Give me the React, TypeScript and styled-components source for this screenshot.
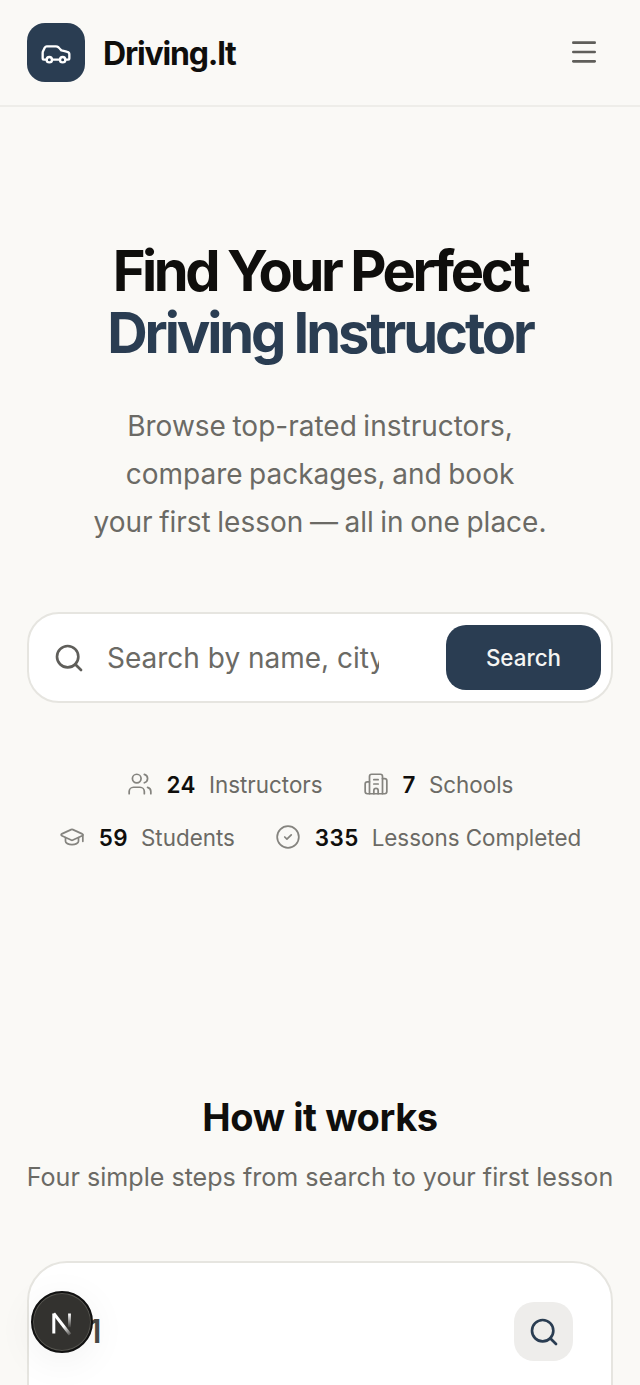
import * as React from "react"
import styled, { createGlobalStyle } from "styled-components"
import { Building2, Car, CircleCheck, GraduationCap, Menu, Search, Users } from "lucide-react"

const GlobalStyle = createGlobalStyle`
  html, body {
    margin: 0;
    padding: 0;
    background: #faf9f6;
    font-family: Inter, "Liberation Sans", sans-serif;
    overflow-x: hidden;
  }
  * { box-sizing: border-box; }
`

const Header = styled.header`
  display: flex;
  align-items: center;
  justify-content: space-between;
  height: 107px;
  padding: 0 27px;
  border-bottom: 2px solid #eeede9;
`

const Brand = styled.div`
  display: flex;
  align-items: center;
  gap: 18px;
`

const LogoMark = styled.div`
  display: flex;
  align-items: center;
  justify-content: center;
  width: 58px;
  height: 59px;
  border-radius: 18px;
  background: #2a3d52;
  color: #fff;
`

const BrandName = styled.span`
  margin-top: 2px;
  font-size: 32px;
  font-weight: 700;
  letter-spacing: -1.2px;
  color: #0f0e0c;
`

const MenuButton = styled.button`
  display: flex;
  padding: 0;
  margin: 0 13px 2px 0;
  border: 0;
  background: none;
  color: #5f5e5a;
`

const Hero = styled.section`
  display: flex;
  flex-direction: column;
  align-items: center;
  padding: 133px 27px 0;
`

const Title = styled.h1`
  margin: 0;
  font-size: 56px;
  line-height: 62px;
  font-weight: 700;
  letter-spacing: -3.4px;
  text-align: center;
  color: #0f0e0c;
`

const Accent = styled.span`
  display: block;
  letter-spacing: -3.1px;
  color: #2a3d52;
`

const Lead = styled.p`
  margin: 38px 0 0;
  font-size: 28px;
  line-height: 48px;
  word-spacing: -1.3px;
  text-align: center;
  color: #6b6a65;
`

const SearchBox = styled.form`
  display: flex;
  align-items: center;
  width: 586px;
  height: 91px;
  margin-top: 66px;
  padding: 0 10px 0 24px;
  border: 2px solid #e6e5e0;
  border-radius: 32px;
  background: #fff;
  color: #5f5e5a;
`

const SearchInput = styled.input`
  flex: 1;
  min-width: 0;
  margin-left: 22px;
  margin-right: 67px;
  padding: 0;
  border: 0;
  outline: 0;
  background: none;
  font: inherit;
  font-size: 28px;
  color: #0f0e0c;

  &::placeholder {
    color: #6b6a65;
    opacity: 1;
  }
`

const SearchButton = styled.button`
  flex: none;
  width: 155px;
  height: 65px;
  border: 0;
  border-radius: 20px;
  background: #2a3d52;
  color: #f5f5f3;
  font: inherit;
  font-size: 22.4px;
  font-weight: 500;
`

const Stats = styled.div`
  display: flex;
  flex-wrap: wrap;
  justify-content: center;
  gap: 25px 40px;
  width: 586px;
  margin-top: 67px;
`

const Stat = styled.div`
  display: flex;
  align-items: center;
  height: 28px;
  font-size: 22.4px;
  color: #6b6a65;

  svg {
    flex: none;
    margin-right: 14px;
    color: #85847f;
  }
`

const StatValue = styled.strong`
  margin-right: 13px;
  font-weight: 600;
  letter-spacing: 0.4px;
  color: #0f0e0c;
`

const Steps = styled.section`
  display: flex;
  flex-direction: column;
  align-items: center;
  padding: 0 27px 40px;
  margin-top: 242px;
`

const StepsTitle = styled.h2`
  margin: 0;
  font-size: 38px;
  line-height: 48px;
  font-weight: 700;
  letter-spacing: -0.4px;
  color: #0f0e0c;
`

const StepsLead = styled.p`
  margin: 19px 0 0;
  font-size: 25.1px;
  line-height: 34px;
  white-space: nowrap;
  color: #6b6a65;
`

const StepCard = styled.article`
  display: flex;
  align-items: flex-start;
  justify-content: space-between;
  width: 586px;
  height: 320px;
  margin-top: 67px;
  padding: 39px 38px 0 38px;
  border: 2px solid #e6e5e0;
  border-radius: 40px;
  background: #fff;
`

const StepNumber = styled.span`
  margin-top: 8px;
  font-size: 32px;
  line-height: 44px;
  font-weight: 600;
  color: #4a4945;
`

const StepIcon = styled.div`
  display: flex;
  align-items: center;
  justify-content: center;
  width: 59px;
  height: 59px;
  border-radius: 20px;
  background: #eeedeb;
  color: #2a3d52;
`

const DevBadge = styled.div`
  position: fixed;
  left: 31px;
  top: 1291px;
  display: flex;
  align-items: center;
  justify-content: center;
  width: 62px;
  height: 62px;
  padding-top: 3px;
  border: 2px solid #111;
  border-radius: 50%;
  background: #33322f;
  box-shadow: inset 0 0 0 1px #55544f, 0 8px 40px rgba(0, 0, 0, 0.06);
`

const NextMark = () => (
  <svg width="24" height="24" viewBox="0 0 24 24" fill="none">
    <defs>
      <linearGradient id="next-diagonal" x1="4" y1="2" x2="20" y2="23" gradientUnits="userSpaceOnUse">
        <stop offset="0.6" stopColor="#fff" />
        <stop offset="1" stopColor="#fff" stopOpacity="0.15" />
      </linearGradient>
      <linearGradient id="next-stem" x1="19" y1="2" x2="19" y2="16" gradientUnits="userSpaceOnUse">
        <stop offset="0" stopColor="#fff" />
        <stop offset="1" stopColor="#fff" stopOpacity="0" />
      </linearGradient>
    </defs>
    <path d="M3.8 1.5v20" stroke="#fff" strokeWidth="3" />
    <path d="M3.8 1.5 20 22.5" stroke="url(#next-diagonal)" strokeWidth="3" />
    <path d="M19.5 1.5v14" stroke="url(#next-stem)" strokeWidth="2.8" />
  </svg>
)

export default function App() {
  return (
    <>
      <GlobalStyle />
      <Header>
        <Brand>
          <LogoMark>
            <Car size={32} strokeWidth={1.75} />
          </LogoMark>
          <BrandName>Driving.lt</BrandName>
        </Brand>
        <MenuButton aria-label="Menu">
          <Menu size={32} strokeWidth={2} />
        </MenuButton>
      </Header>

      <main>
        <Hero>
          <Title>
            Find Your Perfect
            <Accent>Driving Instructor</Accent>
          </Title>
          <Lead>
            Browse top-rated instructors,
            <br />
            compare packages, and book
            <br />
            your first lesson — all in one place.
          </Lead>
          <SearchBox onSubmit={(e) => e.preventDefault()}>
            <Search size={32} strokeWidth={2} />
            <SearchInput placeholder="Search by name, city or school" />
            <SearchButton>Search</SearchButton>
          </SearchBox>
          <Stats>
            <Stat>
              <Users size={26} strokeWidth={1.6} />
              <StatValue>24</StatValue>
              Instructors
            </Stat>
            <Stat>
              <Building2 size={26} strokeWidth={1.6} />
              <StatValue>7</StatValue>
              Schools
            </Stat>
            <Stat>
              <GraduationCap size={26} strokeWidth={1.6} />
              <StatValue>59</StatValue>
              Students
            </Stat>
            <Stat>
              <CircleCheck size={26} strokeWidth={1.6} />
              <StatValue>335</StatValue>
              Lessons Completed
            </Stat>
          </Stats>
        </Hero>

        <Steps>
          <StepsTitle>How it works</StepsTitle>
          <StepsLead>Four simple steps from search to your first lesson</StepsLead>
          <StepCard>
            <StepNumber>01</StepNumber>
            <StepIcon>
              <Search size={32} strokeWidth={2} />
            </StepIcon>
          </StepCard>
        </Steps>
      </main>

      <DevBadge>
        <NextMark />
      </DevBadge>
    </>
  )
}
